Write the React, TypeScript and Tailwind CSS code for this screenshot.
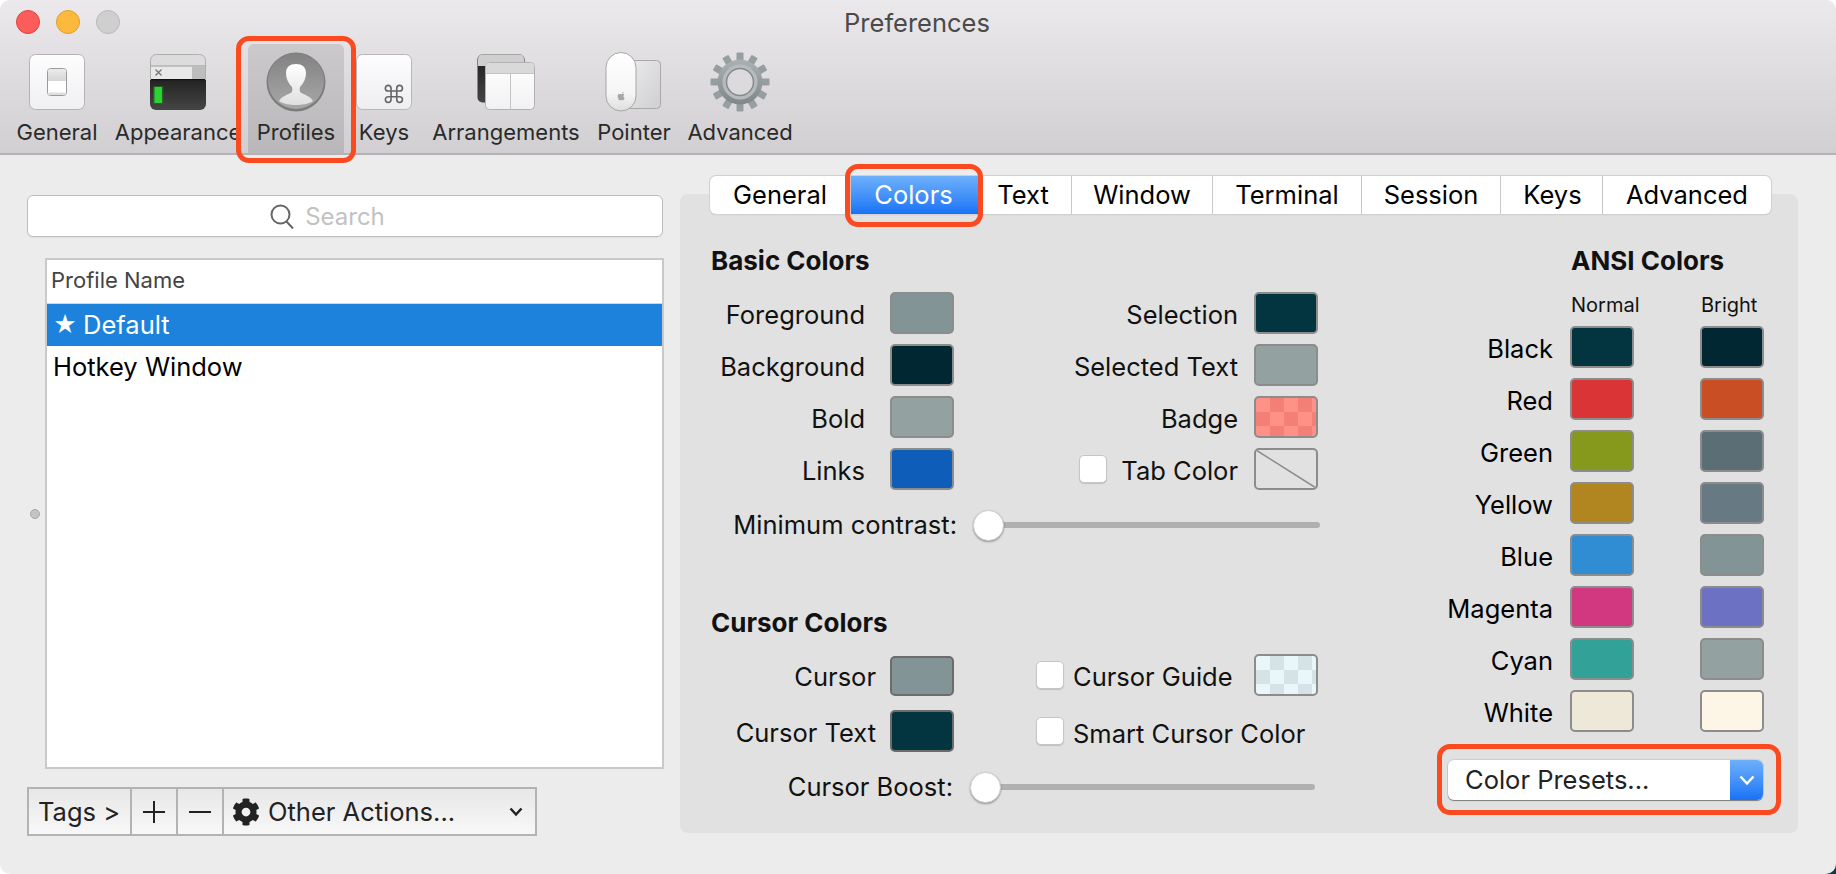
import React from 'react';
import { FaCog } from 'react-icons/fa';

const redBox = 'absolute border-[5px] border-[#fb4a20] rounded-[13px] z-20';

function GeneralIcon() {
  return (
    <svg width="56" height="56" viewBox="0 0 56 56">
      <defs>
        <linearGradient id="genBg" x1="0" y1="0" x2="0" y2="1">
          <stop offset="0" stopColor="#fdfdfe" />
          <stop offset="1" stopColor="#f0eff2" />
        </linearGradient>
        <linearGradient id="genTop" x1="0" y1="0" x2="0" y2="1">
          <stop offset="0" stopColor="#ebebeb" />
          <stop offset="1" stopColor="#d6d6d6" />
        </linearGradient>
      </defs>
      <rect x="0.5" y="0.5" width="55" height="55" rx="6" fill="url(#genBg)" stroke="#b4b2b4" />
      <rect x="18.5" y="14.5" width="19" height="27" rx="3" fill="#fff" stroke="#9a9a9a" />
      <path d="M19 27V17.500a2.500 2.500 0 0 1 2.500-2.500h13a2.500 2.500 0 0 1 2.500 2.500V27z" fill="url(#genTop)" />
      <rect x="19" y="38.500" width="18" height="2.500" rx="1.200" fill="#dedede" />
    </svg>
  );
}

function AppearanceIcon() {
  return (
    <svg width="56" height="56" viewBox="0 0 56 56">
      <defs>
        <clipPath id="appClip">
          <rect width="56" height="56" rx="6" />
        </clipPath>
        <linearGradient id="appDark" x1="0" y1="0" x2="0" y2="1">
          <stop offset="0" stopColor="#232323" />
          <stop offset="1" stopColor="#454545" />
        </linearGradient>
      </defs>
      <g clipPath="url(#appClip)">
        <rect width="56" height="12" fill="#dcdcdc" />
        <rect y="12" width="56" height="14" fill="#e8e8e8" />
        <rect y="11.500" width="56" height="1" fill="#9c9c9c" />
        <rect x="42" y="12" width="14" height="14" fill="#bdbdbd" />
        <path d="M5.500 15.500l6 6M11.500 15.500l-6 6" stroke="#777" strokeWidth="1.300" />
        <rect y="25.500" width="56" height="30.500" fill="url(#appDark)" />
        <rect y="25" width="56" height="1.200" fill="#111" />
        <rect x="3" y="32" width="10.500" height="18" rx="1" fill="#1f7a24" opacity="0.6" />
        <rect x="4.500" y="33" width="7.500" height="16" fill="#2bd32f" />
      </g>
      <path d="M0.500 26V6.500a6 6 0 0 1 6-6h43a6 6 0 0 1 6 6V26" fill="none" stroke="#aeaeae" />
    </svg>
  );
}

function ProfileIcon() {
  return (
    <svg width="60" height="60" viewBox="0 0 60 60">
      <defs>
        <linearGradient id="proBg" x1="0" y1="0" x2="0" y2="1">
          <stop offset="0" stopColor="#828282" />
          <stop offset="1" stopColor="#a8a8a8" />
        </linearGradient>
        <linearGradient id="proFace" x1="0" y1="0" x2="0" y2="1">
          <stop offset="0" stopColor="#ffffff" />
          <stop offset="1" stopColor="#e0e0e0" />
        </linearGradient>
      </defs>
      <circle cx="30" cy="30" r="29.500" fill="#7c7c7c" />
      <circle cx="30" cy="29" r="28" fill="url(#proBg)" />
      <path
        d="M13 49C16 44 22 42.500 25.500 40.500C26.500 39.500 26.500 37 26 35C23 32 20 27 20 21C20 15 24 12 30 12C36 12 40 15 40 21C40 27 37 32 34 35C33.500 37 33.500 39.500 34.500 40.500C38 42.500 44 44 47 49C43 52 36 53 30 53C24 53 17 52 13 49Z"
        fill="url(#proFace)"
      />
    </svg>
  );
}

function KeysIcon() {
  return (
    <svg width="56" height="56" viewBox="0 0 56 56">
      <defs>
        <linearGradient id="keyBg" x1="0" y1="0" x2="0" y2="1">
          <stop offset="0" stopColor="#fdfdfe" />
          <stop offset="1" stopColor="#eeedf0" />
        </linearGradient>
      </defs>
      <rect x="0.500" y="0.500" width="55" height="55" rx="6" fill="url(#keyBg)" stroke="#b8b6b8" />
      <g transform="translate(26.500 28.500) scale(0.95)" fill="none" stroke="#666" strokeWidth="1.700">
        <path d="M15 6v12a3 3 0 1 0 3-3H6a3 3 0 1 0 3 3V6a3 3 0 1 0-3 3h12a3 3 0 1 0-3-3" />
      </g>
    </svg>
  );
}

function ArrangementsIcon() {
  return (
    <svg width="58" height="60" viewBox="0 0 58 60">
      <defs>
        <linearGradient id="arrDark" x1="0" y1="0" x2="0" y2="1">
          <stop offset="0" stopColor="#1f1f1f" />
          <stop offset="1" stopColor="#444" />
        </linearGradient>
        <linearGradient id="arrWhite" x1="0" y1="0" x2="0" y2="1">
          <stop offset="0" stopColor="#ffffff" />
          <stop offset="1" stopColor="#f1f1f3" />
        </linearGradient>
      </defs>
      <rect x="0.500" y="2.500" width="47" height="48" rx="5" fill="url(#arrDark)" />
      <path d="M1 14V7a4.500 4.500 0 0 1 4.500-4.500h38A4.500 4.500 0 0 1 47 7v7z" fill="#cfcfcf" />
      <rect x="8.500" y="10.500" width="49" height="47" rx="4" fill="url(#arrWhite)" stroke="#b2b2b2" />
      <path d="M9 21v-6.500a3.500 3.500 0 0 1 3.500-3.500h41a3.500 3.500 0 0 1 3.500 3.500V21z" fill="#d9d9d9" />
      <path d="M9 21.500h48M33.500 21.500V57" stroke="#c4c4c4" strokeWidth="1" />
    </svg>
  );
}

function PointerIcon() {
  return (
    <svg width="58" height="60" viewBox="0 0 58 60">
      <defs>
        <linearGradient id="padBg" x1="0" y1="0" x2="1" y2="1">
          <stop offset="0" stopColor="#ececee" />
          <stop offset="1" stopColor="#cfcfd1" />
        </linearGradient>
        <linearGradient id="mouseBg" x1="0" y1="0" x2="0" y2="1">
          <stop offset="0" stopColor="#ffffff" />
          <stop offset="0.7" stopColor="#f5f5f6" />
          <stop offset="1" stopColor="#dedede" />
        </linearGradient>
      </defs>
      <rect x="20.500" y="8.500" width="35" height="48" rx="4" fill="url(#padBg)" stroke="#a9a9a9" />
      <rect x="1" y="0.500" width="30" height="58.500" rx="15" fill="url(#mouseBg)" stroke="#a6a6a6" />
      <path
        d="M16.800 41.500c.3-1 1-1.600 1.700-1.800c.1 1-.6 2-1.700 1.800zM13.500 47c-1-1.500-1.200-3.500-.2-4.400c1-.9 2.200-.4 3-.3c.8-.1 2-.6 3 .2c-1.300 1-1.100 2.800.3 3.400c-.4 1.200-1.200 2.400-2 2.400c-.6 0-.9-.3-1.400-.3c-.5 0-.9.300-1.400.300c-.6 0-1.100-.9-1.300-.9z"
        fill="#a5a5a5"
      />
    </svg>
  );
}

function GearIcon() {
  const teeth = [0, 30, 60, 90, 120, 150, 180, 210, 240, 270, 300, 330];
  return (
    <svg width="60" height="60" viewBox="0 0 60 60">
      <defs>
        <linearGradient id="gearBg" x1="0" y1="0" x2="0" y2="1">
          <stop offset="0" stopColor="#a9b1b3" />
          <stop offset="1" stopColor="#7f8789" />
        </linearGradient>
      </defs>
      <g fill="url(#gearBg)">
        {teeth.map((t) => (
          <rect key={t} x="26.500" y="0.500" width="7" height="12" rx="1" transform={`rotate(${t} 30 30)`} fill="#969ea0" />
        ))}
        <circle cx="30" cy="30" r="22.500" />
      </g>
      <circle cx="30" cy="30" r="17.500" fill="#b6bcbe" />
      <circle cx="30" cy="30" r="13.500" fill="#dcdadc" stroke="#848a8c" strokeWidth="1.500" />
    </svg>
  );
}

const toolbarItems = [
  { label: 'General', box: 'ml-[14px] w-[86px]', icon: <GeneralIcon /> },
  { label: 'Appearance', box: 'ml-[16px] w-[124px]', icon: <AppearanceIcon /> },
  { label: 'Profiles', box: 'ml-[8px] w-[96px] rounded-t-md bg-gradient-to-b from-[#cbc9cb] to-[#b9b7b9]', icon: <ProfileIcon /> },
  { label: 'Keys', box: 'w-[80px]', icon: <KeysIcon /> },
  { label: 'Arrangements', box: 'ml-[9px] w-[146px]', icon: <ArrangementsIcon /> },
  { label: 'Pointer', box: 'ml-[18px] w-[74px]', icon: <PointerIcon /> },
  { label: 'Advanced', box: 'ml-[19px] w-[100px]', icon: <GearIcon /> },
];

const tabs = [
  { label: 'General', width: 'w-[141px]' },
  { label: 'Colors', width: 'w-[130px] pr-[4px]', active: true },
  { label: 'Text', width: 'w-[91px] pr-[6px]' },
  { label: 'Window', width: 'w-[141px]' },
  { label: 'Terminal', width: 'w-[149px]' },
  { label: 'Session', width: 'w-[139px]' },
  { label: 'Keys', width: 'w-[102px] pl-[2px]' },
  { label: 'Advanced', width: 'flex-1' },
];

const ansiColors = [
  { name: 'Black', normal: 'bg-[#033541]', bright: 'bg-[#012832]' },
  { name: 'Red', normal: 'bg-[#da3437]', bright: 'bg-[#c94e23]' },
  { name: 'Green', normal: 'bg-[#87991d]', bright: 'bg-[#5b6e75]' },
  { name: 'Yellow', normal: 'bg-[#b1851f]', bright: 'bg-[#677a83]' },
  { name: 'Blue', normal: 'bg-[#308cd3]', bright: 'bg-[#839496]' },
  { name: 'Magenta', normal: 'bg-[#d2387f]', bright: 'bg-[#6c71c4]' },
  { name: 'Cyan', normal: 'bg-[#32a198]', bright: 'bg-[#93a1a1]' },
  { name: 'White', normal: 'bg-[#eee8d8]', bright: 'bg-[#fdf6e6]' },
];

function Swatch({ className }: { className: string }) {
  return <div className={`w-[64px] shrink-0 rounded-[5px] border-2 border-[#8c8c8c] ${className}`} />;
}

function Checkbox() {
  return <div className="h-[28px] w-[28px] shrink-0 rounded-[5px] border border-[#c6c6c6] bg-white shadow-[0_1px_1px_rgba(0,0,0,0.15)]" />;
}

function Slider() {
  return (
    <div className="flex flex-1 items-center">
      <div className="relative z-10 h-[31px] w-[31px] shrink-0 rounded-full border border-[#d0d0d0] bg-white shadow-[0_1px_2px_rgba(0,0,0,0.35)]" />
      <div className="-ml-[4px] h-[6px] flex-1 rounded-full bg-[#b0b0b0]" />
    </div>
  );
}

function BasicRow({ left, leftColor, right, rightColor }: { left: string; leftColor: string; right: string; rightColor: string }) {
  return (
    <div className="flex h-[42px] items-stretch">
      <div className="flex w-[154px] items-center justify-end pt-[4px]">{left}</div>
      <Swatch className={`ml-[25px] ${leftColor}`} />
      <div className="flex w-[284px] items-center justify-end pt-[4px]">{right}</div>
      <Swatch className={`ml-[16px] ${rightColor}`} />
    </div>
  );
}

export default function App() {
  return (
    <div className="relative h-[874px] w-[1836px] overflow-hidden bg-white font-[Inter,'Liberation_Sans',sans-serif] text-[25.5px] leading-none text-[#111]">
      {/* Desktop showing through the bottom right corner */}
      <div className="absolute bottom-0 right-0 h-[12px] w-[12px] bg-[#103845]" />

      <div className="relative z-10 flex h-full flex-col rounded-[10px] bg-[#ececec]">
        {/* Title bar and toolbar */}
        <div className="h-[155px] shrink-0 rounded-t-[10px] border-b-2 border-[#b4b2b4] bg-gradient-to-b from-[#ebe9eb] to-[#d1cfd1]">
          <div className="grid h-[44px] grid-cols-[1fr_auto_1fr] items-center">
            <div className="flex gap-[16px] pl-[16px]">
              <div className="h-[24px] w-[24px] rounded-full border border-[#e0443e] bg-[#fc5d5a]" />
              <div className="h-[24px] w-[24px] rounded-full border border-[#dea034] bg-[#fdb93c]" />
              <div className="h-[24px] w-[24px] rounded-full border border-[#b9b9b9] bg-[#cfcfcf]" />
            </div>
            <div className="pr-[2px] pt-[2px] text-[#4a4a4a]">Preferences</div>
          </div>
          <div className="flex h-[109px]">
            {toolbarItems.map((item) => (
              <div key={item.label} className={`flex flex-col items-center pt-[8px] text-[#2a2a2a] ${item.box}`}>
                <div className="flex h-[60px] items-center justify-center">{item.icon}</div>
                <div className="mt-[5px] flex h-[30px] items-center whitespace-nowrap text-[22px]">{item.label}</div>
              </div>
            ))}
          </div>
        </div>

        <div className="flex flex-1">
          {/* Profile list */}
          <div className="w-[680px] shrink-0 pl-[27px] pt-[40px]">
            <div className="flex h-[42px] w-[636px] items-center justify-center rounded-[6px] border border-[#bdbdbd] bg-white pr-[35px] shadow-[0_1px_1px_rgba(0,0,0,0.05)]">
              <svg width="25" height="25" viewBox="0 0 25 25" fill="none" stroke="#666" strokeWidth="2">
                <circle cx="10.500" cy="10.500" r="9" />
                <path d="M16.500 17.500L23 24.500" />
              </svg>
              <span className="ml-[10px] pt-[2px] text-[24px] text-[#c2c2c2]">Search</span>
            </div>
            <div className="mt-[21px] flex items-center">
              <div className="ml-[3px] h-[10px] w-[10px] rounded-full border border-[#a8a8a8] bg-[#c4c4c4]" />
              <div className="ml-[5px] h-[511px] w-[619px] border-2 border-[#c9c9c9] bg-white">
                <div className="flex h-[44px] items-center border-b border-[#d4d4d4] pb-[3px] pl-[4px] text-[22px] text-[#444]">Profile Name</div>
                <div className="flex h-[42px] items-center gap-[6px] bg-[#1c82dc] pl-[6px] text-white">
                  <span className="text-[23px]">★</span>
                  <span>Default</span>
                </div>
                <div className="flex h-[42px] items-center pl-[6px] text-black">Hotkey Window</div>
              </div>
            </div>
            <div className="mt-[18px] flex h-[49px] w-[510px] divide-x-2 divide-[#b3b3b3] border-2 border-[#b3b3b3] bg-gradient-to-b from-[#e7e7e7] to-[#f8f8f8] text-[#222]">
              <div className="flex w-[103px] items-center pl-[9px]">Tags &gt;</div>
              <div className="flex w-[46px] items-center justify-center">
                <svg width="24" height="24" viewBox="0 0 24 24" stroke="#222" strokeWidth="2">
                  <path d="M12 1v22M1 12h22" />
                </svg>
              </div>
              <div className="flex w-[46px] items-center justify-center">
                <svg width="24" height="24" viewBox="0 0 24 24" stroke="#222" strokeWidth="2">
                  <path d="M1 12h22" />
                </svg>
              </div>
              <div className="flex flex-1 items-center pl-[8px]">
                <FaCog size={28} color="#222" />
                <span className="ml-[8px]">Other Actions...</span>
                <svg className="ml-auto mr-[12px]" width="14" height="10" viewBox="0 0 14 10" fill="none" stroke="#222" strokeWidth="2.500">
                  <path d="M1.500 1.500L7 7.500L12.500 1.500" />
                </svg>
              </div>
            </div>
          </div>

          {/* Color settings */}
          <div className="w-[1118px] shrink-0 pt-[21px]">
            <div className="relative z-10 ml-[30px] flex h-[38px] w-[1061px] divide-x divide-[#c8c8c8] rounded-[6px] bg-white text-black shadow-[0_0_0_1px_#d0d0d0,0_1px_1px_rgba(0,0,0,0.2)]">
              {tabs.map((tab) => (
                <div
                  key={tab.label}
                  className={`flex items-center justify-center ${tab.width} ${tab.active ? 'bg-gradient-to-b from-[#6db0fb] to-[#1772f5] text-white' : ''}`}
                >
                  {tab.label}
                </div>
              ))}
            </div>
            <div className="-mt-[20px] flex h-[639px] rounded-[8px] bg-[#e1e1e1] pt-[52px]">
              <div className="w-[660px] shrink-0 pl-[31px]">
                <div className="flex h-[30px] items-center text-[26px] font-bold">Basic Colors</div>
                <div className="mt-[16px] flex flex-col gap-[10px]">
                  <BasicRow left="Foreground" leftColor="bg-[#839496]" right="Selection" rightColor="bg-[#033541]" />
                  <BasicRow left="Background" leftColor="bg-[#012832]" right="Selected Text" rightColor="bg-[#93a1a1]" />
                  <BasicRow
                    left="Bold"
                    leftColor="bg-[#93a1a1]"
                    right="Badge"
                    rightColor="bg-[repeating-conic-gradient(#f47f77_0_25%,#ff9188_0_50%)] bg-[length:28px_28px]"
                  />
                  <div className="flex h-[42px] items-stretch">
                    <div className="flex w-[154px] items-center justify-end pt-[4px]">Links</div>
                    <Swatch className="ml-[25px] bg-[#0e5db8]" />
                    <div className="flex w-[284px] items-center justify-end gap-[14px]">
                      <Checkbox />
                      <span className="pt-[4px]">Tab Color</span>
                    </div>
                    <svg className="ml-[16px] rounded-[5px] border-2 border-[#8c8c8c]" width="64" height="42" viewBox="0 0 60 38">
                      <path d="M0 0L60 38" stroke="#8c8c8c" strokeWidth="1.500" />
                    </svg>
                  </div>
                </div>
                <div className="mt-[17px] flex h-[36px] w-[609px] items-center">
                  <div className="w-[246px] text-right">Minimum contrast:</div>
                  <div className="ml-[16px] flex flex-1">
                    <Slider />
                  </div>
                </div>

                <div className="mt-[65px] flex h-[30px] items-center text-[26px] font-bold">Cursor Colors</div>
                <div className="mt-[16px] flex h-[42px] w-[607px] items-stretch">
                  <div className="flex w-[165px] items-center justify-end pt-[3px]">Cursor</div>
                  <Swatch className="ml-[14px] mt-[2px] !border-[#6c6c6c] bg-[#839496]" />
                  <div className="ml-[82px] flex flex-1 items-center gap-[9px]">
                    <Checkbox />
                    <span className="pt-[3px]">Cursor Guide</span>
                  </div>
                  <Swatch className="bg-[repeating-conic-gradient(#d5e3e7_0_25%,#e9f7fb_0_50%)] bg-[length:28px_28px]" />
                </div>
                <div className="mt-[14px] flex h-[42px] items-stretch">
                  <div className="flex w-[165px] items-center justify-end pt-[3px]">Cursor Text</div>
                  <Swatch className="ml-[14px] !border-[#6c6c6c] bg-[#033541]" />
                  <div className="ml-[82px] flex items-center gap-[9px]">
                    <Checkbox />
                    <span className="pt-[5px]">Smart Cursor Color</span>
                  </div>
                </div>
                <div className="mt-[17px] flex h-[36px] w-[604px] items-center">
                  <div className="w-[242px] text-right">Cursor Boost:</div>
                  <div className="ml-[17px] flex flex-1">
                    <Slider />
                  </div>
                </div>
              </div>

              <div className="flex-1">
                <div className="ml-[231px] flex h-[30px] items-center text-[26px] font-bold">ANSI Colors</div>
                <div className="mt-[15px] flex h-[28px] items-center pl-[231px] text-[20px]">
                  <div className="w-[130px]">Normal</div>
                  <div>Bright</div>
                </div>
                <div className="mt-[7px] flex flex-col gap-[10px]">
                  {ansiColors.map((color) => (
                    <div key={color.name} className="flex h-[42px] items-stretch">
                      <div className="flex w-[213px] items-center justify-end pt-[4px] text-black">{color.name}</div>
                      <Swatch className={`ml-[17px] ${color.normal}`} />
                      <Swatch className={`ml-[66px] ${color.bright}`} />
                    </div>
                  ))}
                </div>
                <div className="ml-[108px] mt-[28px] flex h-[40px] w-[315px] overflow-hidden rounded-[6px] bg-white shadow-[0_1px_1px_rgba(0,0,0,0.4),0_0_0_1px_rgba(0,0,0,0.08)]">
                  <div className="flex flex-1 items-center pl-[17px] text-[#222]">Color Presets...</div>
                  <div className="flex w-[33px] items-center justify-center bg-gradient-to-b from-[#6db0fb] to-[#1772f5]">
                    <svg width="16" height="11" viewBox="0 0 16 11" fill="none" stroke="#fff" strokeWidth="2.500">
                      <path d="M1.500 1.500L8 8.500L14.500 1.500" />
                    </svg>
                  </div>
                </div>
              </div>
            </div>
          </div>
        </div>

        {/* Red annotation boxes */}
        <div className={`${redBox} left-[236px] top-[36px] h-[127px] w-[120px]`} />
        <div className={`${redBox} left-[845px] top-[164px] h-[63px] w-[138px]`} />
        <div className={`${redBox} left-[1437px] top-[744px] h-[71px] w-[344px]`} />
      </div>
    </div>
  );
}
